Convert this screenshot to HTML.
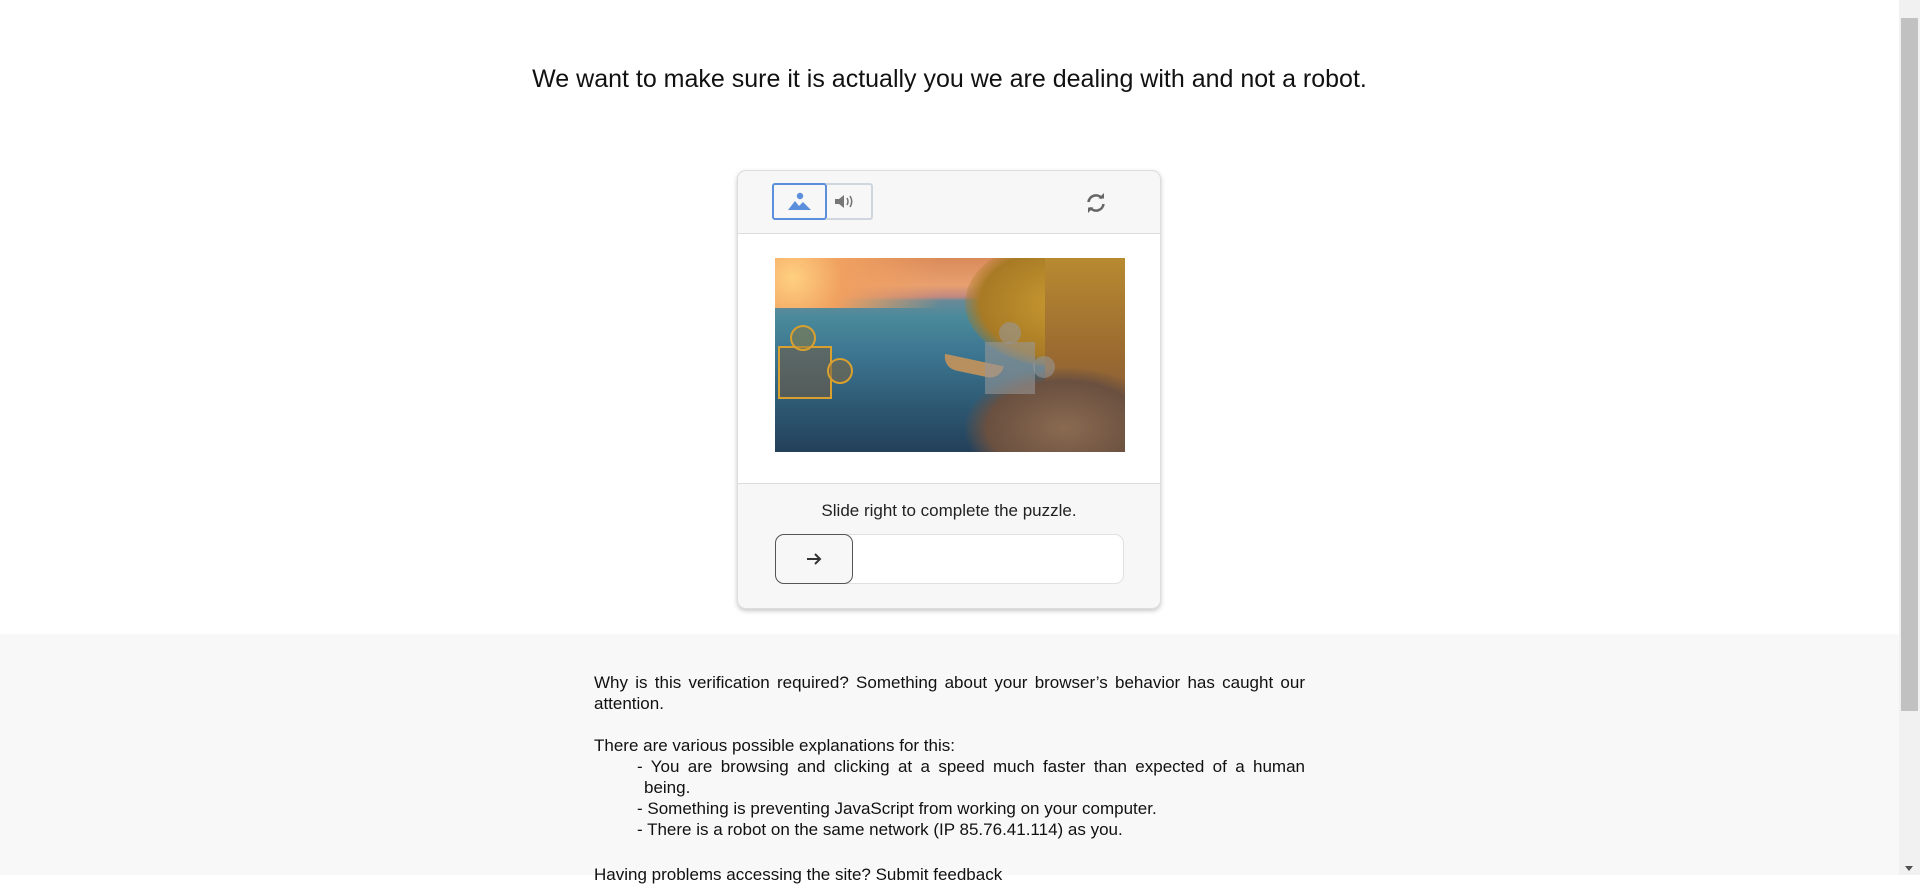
<!DOCTYPE html>
<html><head><meta charset="utf-8"><style>
html,body{margin:0;padding:0;}
body{width:1920px;height:875px;overflow:hidden;position:relative;background:#fff;font-family:"Liberation Sans",sans-serif;color:#111;}
.h{position:absolute;top:65px;left:0;width:1899px;text-align:center;font-size:25px;color:#111;}
.card{position:absolute;left:737px;top:170px;width:422px;height:437px;border:1px solid #ddd;border-radius:9px;box-shadow:0 2px 5px rgba(0,0,0,.22);overflow:hidden;background:#f7f7f7;}
.hdr{position:absolute;left:0;top:0;width:100%;height:62px;border-bottom:1px solid #ddd;}
.mid{position:absolute;left:0;top:63px;width:100%;height:249px;background:#fff;border-bottom:1px solid #ddd;}
.b1{position:absolute;left:34px;top:12px;width:51px;height:33px;border:2px solid #5b8fdb;border-radius:3px;background:#f7f7f7;}
.b2{position:absolute;left:88px;top:12px;width:45px;height:33px;border:2px solid #d0d6de;border-left:none;border-radius:0 3px 3px 0;}
.img{position:absolute;left:37px;top:24px;width:350px;height:194px;overflow:hidden;
background:linear-gradient(180deg,#d98a5a 0%,#e8a070 14%,#c08880 20%,#6a8a98 22%,#4a8a9a 30%,#3c7590 50%,#2e5a74 75%,#24405a 100%);}
.txt{position:absolute;top:330px;left:0;width:100%;text-align:center;font-size:17px;color:#222;}
.sl{position:absolute;left:37px;top:363px;width:347px;height:48px;border:1px solid #e0e0e0;border-radius:9px;background:#fff;}
.hd{position:absolute;left:37px;top:363px;width:76px;height:48px;border:1px solid #555;border-radius:9px;background:#f7f7f7;}
.gray{position:absolute;left:0;top:634px;width:1899px;height:241px;background:#f8f8f8;}
.t{position:absolute;left:594px;width:711px;font-size:17px;line-height:21px;text-align:justify;color:#111;}
.sb{position:absolute;right:0;top:0;width:21px;height:875px;background:#f1f1f1;}
.th{position:absolute;right:2px;top:18px;width:17px;height:693px;background:#c1c1c1;}
</style></head><body>
<div class="h">We want to make sure it is actually you we are dealing with and not a robot.</div>
<div class="card">
 <div class="hdr">
  <div class="b1"><svg width="51" height="33" viewBox="0 0 51 33"><circle cx="26" cy="11" r="3.2" fill="#5b8fdb"/><path d="M14 25 L21 16 L25 21 L29 17 L37 25 Z" fill="#5b8fdb"/></svg></div>
  <div class="b2"><svg width="45" height="33" viewBox="0 0 45 33"><path d="M9 14h4l5-4v13l-5-4H9z" fill="#777"/><path d="M21 13q2 3.5 0 7M24 11q3.5 5.5 0 11" stroke="#777" stroke-width="1.6" fill="none"/></svg></div>
  <svg style="position:absolute;left:346px;top:20px" width="24" height="24" viewBox="0 0 24 24"><path d="M4.5 11A7.5 7.5 0 0 1 18 7.5M19.5 13A7.5 7.5 0 0 1 6 16.5" stroke="#666" stroke-width="2.6" fill="none"/><path d="M14.5 7.5h5.5V2z" fill="#666"/><path d="M9.5 16.5H4V22z" fill="#666"/></svg>
 </div>
 <div class="mid">
  <div class="img">
   <div style="position:absolute;left:0;top:0;width:350px;height:50px;background:radial-gradient(circle at 5% 40%,#ffd080 0,#f0a060 15%,transparent 45%)"></div>
   <div style="position:absolute;left:190px;top:-20px;width:200px;height:130px;border-radius:50%;background:radial-gradient(#c99a30,#a87a25 60%,rgba(150,100,30,0) 75%)"></div>
   <div style="position:absolute;left:270px;top:0;width:80px;height:194px;background:linear-gradient(180deg,#b88a30,#9a6a30 50%,#7a5540)"></div>
   <div style="position:absolute;left:190px;top:110px;width:200px;height:120px;border-radius:50%;background:radial-gradient(#8a6a50,#6a5040 55%,rgba(60,50,50,0) 72%)"></div>
   <div style="position:absolute;left:168px;top:102px;width:60px;height:14px;border-radius:0 0 30px 30px;background:#b89060;transform:rotate(12deg)"></div>
   <div style="position:absolute;left:3px;top:88px;width:50px;height:49px;border:2px solid #d9a030;background:rgba(120,90,60,.5)"></div>
   <div style="position:absolute;left:15px;top:67px;width:22px;height:22px;border-radius:50%;border:2px solid #d9a030;background:rgba(140,120,60,.5)"></div>
   <div style="position:absolute;left:52px;top:100px;width:22px;height:22px;border-radius:50%;border:2px solid #d9a030;background:rgba(120,100,70,.6)"></div>
   <div style="position:absolute;left:210px;top:84px;width:50px;height:52px;background:rgba(150,150,150,.6)"></div>
   <div style="position:absolute;left:224px;top:64px;width:22px;height:22px;border-radius:50%;background:rgba(150,150,150,.6)"></div>
   <div style="position:absolute;left:258px;top:98px;width:22px;height:22px;border-radius:50%;background:rgba(150,150,150,.6)"></div>
  </div>
 </div>
 <div class="txt">Slide right to complete the puzzle.</div>
 <div class="sl"></div>
 <div class="hd"><svg width="76" height="48" viewBox="0 0 76 48"><path d="M31 24h13M39 19l5 5-5 5" stroke="#333" stroke-width="2" fill="none"/></svg></div>
</div>
<div class="gray"></div>
<div class="t" style="top:672px">Why is this verification required? Something about your browser’s behavior has caught our attention.</div>
<div class="t" style="top:735px">There are various possible explanations for this:</div>
<div class="t" style="top:756px;left:637px;width:668px;text-align-last:justify">- You are browsing and clicking at a speed much faster than expected of a human</div>
<div class="t" style="top:777px;left:644px">being.</div>
<div class="t" style="top:798px;left:637px">- Something is preventing JavaScript from working on your computer.</div>
<div class="t" style="top:819px;left:637px">- There is a robot on the same network (IP 85.76.41.114) as you.</div>
<div class="t" style="top:864px">Having problems accessing the site? Submit feedback</div>
<div class="sb"><div class="th"></div><div style="position:absolute;bottom:4px;left:6px;width:0;height:0;border-left:4px solid transparent;border-right:4px solid transparent;border-top:5px solid #505050"></div></div>
</body></html>
